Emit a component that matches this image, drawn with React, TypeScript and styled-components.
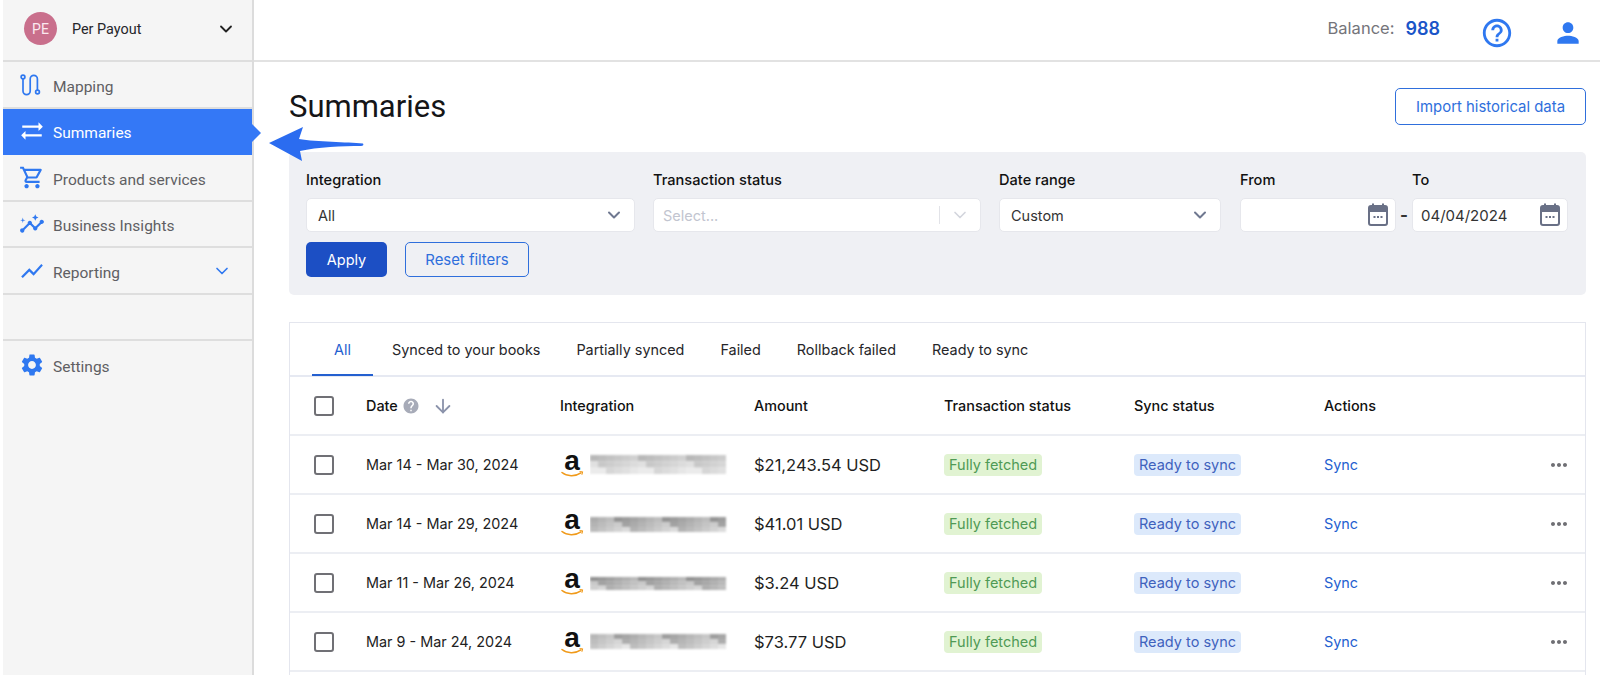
import { createGlobalStyle, styled } from "styled-components";
import { ArrowDown, ChevronDown } from "lucide-react";
import {
  MdHelp,
  MdHelpOutline,
  MdInsights,
  MdMoreHoriz,
  MdOutlineShoppingCart,
  MdPerson,
  MdSettings,
  MdShowChart,
  MdSyncAlt,
} from "react-icons/md";

const GlobalStyle = createGlobalStyle`
  * { box-sizing: border-box; }
  html, body { margin: 0; height: 100%; overflow: hidden; background: #fff; }
  body { font-family: Inter, Roboto, sans-serif; color: #1c1c1f; }
  #root { height: 100%; }
`;

const Page = styled.div`
  position: relative;
  display: flex;
  height: 675px;
  padding-left: 3px;
  overflow: hidden;
`;

const Sidebar = styled.aside`
  flex: 0 0 251px;
  display: flex;
  flex-direction: column;
  background: #f5f5f5;
  border-right: 2px solid #dcdcdc;
  font-family: Roboto, sans-serif;
`;

const Account = styled.div`
  display: flex;
  align-items: center;
  height: 62px;
  padding: 0 16px 3px 21px;
  border-bottom: 2px solid #dedede;
`;

const Avatar = styled.div`
  display: flex;
  align-items: center;
  justify-content: center;
  width: 33px;
  height: 33px;
  border-radius: 50%;
  background: #c96f8c;
  color: #fbe9ef;
  font-size: 14px;
`;

const AccountName = styled.span`
  flex: 1;
  margin: 2px 0 0 15px;
  font-size: 14.4px;
  color: #26262a;
`;

const NavItem = styled.div<{ $active?: boolean }>`
  position: relative;
  display: flex;
  align-items: center;
  height: 46.5px;
  padding: 0 21px 0 16px;
  border-bottom: 2px solid ${(p) => (p.$active ? "#3478f6" : "#dedede")};
  background: ${(p) => (p.$active ? "#3478f6" : "transparent")};
  color: ${(p) => (p.$active ? "#fff" : "#5f5f63")};
  font-size: 15.5px;

  ${(p) =>
    p.$active &&
    `
    &::after {
      content: "";
      position: absolute;
      top: 15px;
      right: -9px;
      border-top: 9.5px solid transparent;
      border-bottom: 9.5px solid transparent;
      border-left: 9px solid #3478f6;
    }
  `}
`;

const NavIcon = styled.span<{ $active?: boolean }>`
  display: flex;
  justify-content: center;
  width: 26px;
  margin: 1px 8px 0 0;
  color: ${(p) => (p.$active ? "#fff" : "#2f78f0")};
`;

const NavLabel = styled.span`
  flex: 1;
  padding-top: 5px;
`;

const NavChevron = styled.span`
  display: flex;
  margin: 2px -1px 0 0;
  color: #2f78f0;
`;

const NavGap = styled.div`
  height: 46.5px;
  border-bottom: 2px solid #dedede;
`;

const NavPlain = styled(NavItem)`
  border-bottom: none;
`;

const Content = styled.div`
  flex: 1;
  min-width: 0;
  display: flex;
  flex-direction: column;
`;

const TopBar = styled.header`
  display: flex;
  align-items: center;
  justify-content: flex-end;
  flex: 0 0 62px;
  padding: 0 16px 0 0;
  border-bottom: 2px solid #e2e2e2;
`;

const Balance = styled.span`
  margin-bottom: 4px;
  font-size: 16.5px;
  color: #74747a;
`;

const BalanceValue = styled.span`
  margin: 0 40px 4px 11px;
  font-size: 18px;
  font-weight: 600;
  color: #1a55c8;
`;

const TopIcon = styled.span<{ $gap?: number }>`
  display: flex;
  margin: 5px 0 0 ${(p) => p.$gap ?? 0}px;
  color: #2f78f0;
`;

const Main = styled.main`
  flex: 1;
  padding: 26px 14px 0 35px;
`;

const TitleRow = styled.div`
  display: flex;
  align-items: center;
  justify-content: space-between;
  height: 37px;
`;

const Title = styled.h1`
  margin: 0;
  font-family: Roboto, sans-serif;
  font-size: 31px;
  font-weight: 400;
  color: #151517;
`;

const OutlineButton = styled.button`
  height: 37px;
  padding: 0 20px;
  border: 1.5px solid #2f6fdc;
  border-radius: 5px;
  background: transparent;
  color: #2f6fdc;
  font-family: Inter, sans-serif;
  font-size: 14.9px;
`;

const Filters = styled.section`
  margin-top: 27px;
  height: 143px;
  padding: 17px 17px;
  border-radius: 5px;
  background: #eff0f4;
`;

const FilterRow = styled.div`
  display: flex;
`;

const Field = styled.div<{ $width: number; $gap?: number }>`
  flex: 0 0 ${(p) => p.$width}px;
  margin-right: ${(p) => p.$gap ?? 0}px;
`;

const FieldLabel = styled.div`
  height: 29px;
  font-size: 14.6px;
  font-weight: 500;
  line-height: 22px;
  color: #111;
`;

const Control = styled.div<{ $placeholder?: boolean; $date?: boolean }>`
  display: flex;
  align-items: center;
  height: 34px;
  padding: 0 ${(p) => (p.$date ? "5px" : "10px")} 0 ${(p) => (p.$placeholder ? "9px" : p.$date ? "8px" : "11px")};
  border: 1px solid #e6e7ec;
  border-radius: 5px;
  background: #fff;
  font-size: ${(p) => (p.$date ? "15px" : "14.5px")};
  color: ${(p) => (p.$placeholder ? "#c2c5d0" : "#333")};
`;

const ControlText = styled.span`
  flex: 1;
`;

const Divider = styled.span`
  width: 1px;
  height: 18px;
  margin-right: 10px;
  background: #e2e3e8;
`;

const DateDash = styled.span`
  flex: 0 0 16px;
  margin-top: 29px;
  text-align: center;
  line-height: 34px;
  font-size: 17px;
  font-weight: 700;
  color: #333;
`;

const Actions = styled.div`
  display: flex;
  gap: 18px;
  margin-top: 10px;
`;

const ApplyButton = styled.button`
  width: 81px;
  height: 35px;
  border: none;
  border-radius: 5px;
  background: #1c4fc4;
  color: #fff;
  font-family: Inter, sans-serif;
  font-size: 14.5px;
`;

const ResetButton = styled(OutlineButton)`
  width: 124px;
  height: 35px;
  padding: 0;
`;

const Card = styled.section`
  margin-top: 27px;
  border: 1px solid #e4e6ee;
  border-bottom: none;
  height: 400px;
`;

const Tabs = styled.nav`
  display: flex;
  height: 54px;
  padding-left: 22px;
  border-bottom: 2px solid #e6e9f2;
`;

const Tab = styled.div<{ $active?: boolean }>`
  display: flex;
  align-items: center;
  height: 53px;
  margin-right: ${(p) => (p.$active ? "9px" : "16px")};
  padding: 1px ${(p) => (p.$active ? "22px" : "10px")} 0;
  border-bottom: 2px solid ${(p) => (p.$active ? "#2460d0" : "transparent")};
  font-size: 14.4px;
  color: ${(p) => (p.$active ? "#2460d0" : "#26262a")};
`;

const TableRow = styled.div<{ $head?: boolean }>`
  display: grid;
  grid-template-columns: 76px 194px 194px 190px 190px 190px 1fr 48px;
  align-items: center;
  height: 59px;
  border-bottom: 2px solid #eceef3;
  font-size: 14.4px;
  font-weight: ${(p) => (p.$head ? 500 : 400)};
  color: ${(p) => (p.$head ? "#111" : "#222")};
`;

const CheckCell = styled.div`
  display: flex;
  justify-content: flex-start;
  padding-left: 24px;
`;

const CheckBox = styled.span`
  width: 20px;
  height: 20px;
  border: 2px solid #707075;
  border-radius: 3px;
`;

const HeadDate = styled.div`
  display: flex;
  align-items: center;
  gap: 4px;
`;

const HelpDot = styled.span`
  display: flex;
  color: #a7abb8;
`;

const SortIcon = styled.span`
  display: flex;
  margin-left: 8px;
  color: #8b93ab;
`;

const IntegrationCell = styled.div`
  display: flex;
  align-items: center;
  gap: 6px;
`;

const Amount = styled.span`
  font-size: 16.5px;
  color: #1f1f22;
`;

const Badge = styled.span<{ $tone: "green" | "blue" }>`
  justify-self: start;
  padding: 3px 5px;
  border-radius: 4px;
  font-size: 14.5px;
  line-height: 16px;
  background: ${(p) => (p.$tone === "green" ? "#e1f3d2" : "#dce9fb")};
  color: ${(p) => (p.$tone === "green" ? "#4f9a55" : "#3f62bd")};
`;

const SyncLink = styled.a`
  color: #2460d0;
  font-size: 14.4px;
`;

const MoreIcon = styled.span`
  display: flex;
  justify-content: flex-end;
  padding-right: 14px;
  color: #6f6f74;
`;

function MappingIcon() {
  return (
    <svg width="24" height="24" viewBox="1.5 0 24 24" fill="none" stroke="currentColor" strokeWidth="1.7">
      <circle cx="4.5" cy="4" r="1.9" />
      <path d="M4.5 6v12a3.6 3.6 0 0 0 7.2 0V6a3.6 3.6 0 0 1 7.2 0v11" />
      <circle cx="19" cy="19" r="1.9" />
    </svg>
  );
}

function CalendarIcon() {
  return (
    <svg width="24" height="26" viewBox="0 0 24 26" fill="none">
      <rect x="3" y="4" width="18" height="19" rx="2" stroke="#697086" strokeWidth="2" />
      <path d="M3 6a2 2 0 0 1 2-2h14a2 2 0 0 1 2 2v4H3z" fill="#697086" />
      <path d="M7 1.5v4M17 1.5v4" stroke="#697086" strokeWidth="2" />
      <path d="M7.5 15h2M11 15h2M14.5 15h2" stroke="#697086" strokeWidth="2" />
    </svg>
  );
}

function AmazonLogo() {
  return (
    <svg width="24" height="40" viewBox="0 0 24 40">
      <text x="12" y="25" textAnchor="middle" fontFamily="Liberation Sans, sans-serif" fontWeight="700" fontSize="28" fill="#111">
        a
      </text>
      <path d="M2 27.5c5 4 13 4.4 19 .4" fill="none" stroke="#f09a1a" strokeWidth="1.6" strokeLinecap="round" />
      <path d="M19.5 26.6l3.2.2-.8 3" fill="none" stroke="#f09a1a" strokeWidth="1" />
    </svg>
  );
}

// tops and bottoms of the pixelated account names, each row is different
const blurStyles = [
  { top: 3, height: 19, base: 72, spread: 10 },
  { top: 6, height: 15, base: 58, spread: 16 },
  { top: 7, height: 13, base: 56, spread: 16 },
  { top: 5, height: 15, base: 62, spread: 16 },
];

function BlurredName({ row }: { row: number }) {
  const { top, height, base, spread } = blurStyles[row];
  const cells = Array.from({ length: 17 });
  const band = height / 3;
  return (
    <svg width="140" height="26" viewBox="0 0 140 26">
      <defs>
        <filter id={`soft${row}`}>
          <feGaussianBlur stdDeviation="1" />
        </filter>
      </defs>
      <g filter={`url(#soft${row})`}>
        {cells.map((_, i) =>
          [0, 1, 2].map((b) => {
            const wobble = ((i * 7 + b * 5 + row * 3) % 6) / 5;
            const light = base + b * 6 + wobble * spread;
            return (
              <rect
                key={`${i}-${b}`}
                x={i * 8}
                y={top + b * band}
                width={8}
                height={band}
                fill={`hsl(0,0%,${Math.min(light, 92)}%)`}
              />
            );
          }),
        )}
      </g>
    </svg>
  );
}

const rows = [
  { date: "Mar 14 - Mar 30, 2024", amount: "$21,243.54 USD" },
  { date: "Mar 14 - Mar 29, 2024", amount: "$41.01 USD" },
  { date: "Mar 11 - Mar 26, 2024", amount: "$3.24 USD" },
  { date: "Mar 9 - Mar 24, 2024", amount: "$73.77 USD" },
];

const tabs = ["Synced to your books", "Partially synced", "Failed", "Rollback failed", "Ready to sync"];

const ArrowSvg = styled.svg`
  position: absolute;
  top: 125px;
  left: 267px;
`;

// the annotation arrow pasted over the screenshot
function CalloutArrow() {
  return (
    <ArrowSvg width="100" height="38" viewBox="0 0 100 38" aria-hidden="true">
      <path d="M2 18 36 2 32 14C50 17 80 17 96 18.5 97 20 96 21 94 21 76 21 50 22 33 26L35 36Z" fill="#2b6cf0" />
    </ArrowSvg>
  );
}

function App() {
  return (
    <Page>
      <GlobalStyle />
      <Sidebar>
        <Account>
          <Avatar>PE</Avatar>
          <AccountName>Per Payout</AccountName>
          <ChevronDown size={20} strokeWidth={2.2} color="#222" />
        </Account>
        <NavItem>
          <NavIcon><MappingIcon /></NavIcon>
          <NavLabel>Mapping</NavLabel>
        </NavItem>
        <NavItem $active>
          <NavIcon $active><MdSyncAlt size={26} /></NavIcon>
          <NavLabel>Summaries</NavLabel>
        </NavItem>
        <NavItem>
          <NavIcon><MdOutlineShoppingCart size={27} /></NavIcon>
          <NavLabel>Products and services</NavLabel>
        </NavItem>
        <NavItem>
          <NavIcon><MdInsights size={26} /></NavIcon>
          <NavLabel>Business Insights</NavLabel>
        </NavItem>
        <NavItem>
          <NavIcon><MdShowChart size={26} /></NavIcon>
          <NavLabel>Reporting</NavLabel>
          <NavChevron><ChevronDown size={20} /></NavChevron>
        </NavItem>
        <NavGap />
        <NavPlain>
          <NavIcon><MdSettings size={26} /></NavIcon>
          <NavLabel>Settings</NavLabel>
        </NavPlain>
      </Sidebar>

      <Content>
        <TopBar>
          <Balance>Balance:</Balance>
          <BalanceValue>988</BalanceValue>
          <TopIcon><MdHelpOutline size={34} /></TopIcon>
          <TopIcon $gap={38}><MdPerson size={32} /></TopIcon>
        </TopBar>
        <Main>
          <TitleRow>
            <Title>Summaries</Title>
            <OutlineButton>Import historical data</OutlineButton>
          </TitleRow>

          <Filters>
            <FilterRow>
              <Field $width={329} $gap={18}>
                <FieldLabel>Integration</FieldLabel>
                <Control>
                  <ControlText>All</ControlText>
                  <ChevronDown size={20} strokeWidth={2.4} color="#6f7890" />
                </Control>
              </Field>
              <Field $width={328} $gap={18}>
                <FieldLabel>Transaction status</FieldLabel>
                <Control $placeholder>
                  <ControlText>Select...</ControlText>
                  <Divider />
                  <ChevronDown size={20} color="#d3d5dd" />
                </Control>
              </Field>
              <Field $width={222} $gap={19}>
                <FieldLabel>Date range</FieldLabel>
                <Control>
                  <ControlText>Custom</ControlText>
                  <ChevronDown size={20} strokeWidth={2.4} color="#6f7890" />
                </Control>
              </Field>
              <Field $width={156}>
                <FieldLabel>From</FieldLabel>
                <Control $date>
                  <ControlText />
                  <CalendarIcon />
                </Control>
              </Field>
              <DateDash>-</DateDash>
              <Field $width={156}>
                <FieldLabel>To</FieldLabel>
                <Control $date>
                  <ControlText>04/04/2024</ControlText>
                  <CalendarIcon />
                </Control>
              </Field>
            </FilterRow>
            <Actions>
              <ApplyButton>Apply</ApplyButton>
              <ResetButton>Reset filters</ResetButton>
            </Actions>
          </Filters>

          <Card>
            <Tabs>
              <Tab $active>All</Tab>
              {tabs.map((t) => (
                <Tab key={t}>{t}</Tab>
              ))}
            </Tabs>
            <TableRow $head>
              <CheckCell><CheckBox /></CheckCell>
              <HeadDate>
                Date
                <HelpDot><MdHelp size={18} /></HelpDot>
                <SortIcon><ArrowDown size={22} strokeWidth={2} /></SortIcon>
              </HeadDate>
              <span>Integration</span>
              <span>Amount</span>
              <span>Transaction status</span>
              <span>Sync status</span>
              <span>Actions</span>
              <span />
            </TableRow>
            {rows.map((r, i) => (
              <TableRow key={r.date}>
                <CheckCell><CheckBox /></CheckCell>
                <span>{r.date}</span>
                <IntegrationCell>
                  <AmazonLogo />
                  <BlurredName row={i} />
                </IntegrationCell>
                <Amount>{r.amount}</Amount>
                <Badge $tone="green">Fully fetched</Badge>
                <Badge $tone="blue">Ready to sync</Badge>
                <SyncLink>Sync</SyncLink>
                <MoreIcon><MdMoreHoriz size={24} /></MoreIcon>
              </TableRow>
            ))}
          </Card>
        </Main>
      </Content>

      <CalloutArrow />
    </Page>
  );
}

export default App;
